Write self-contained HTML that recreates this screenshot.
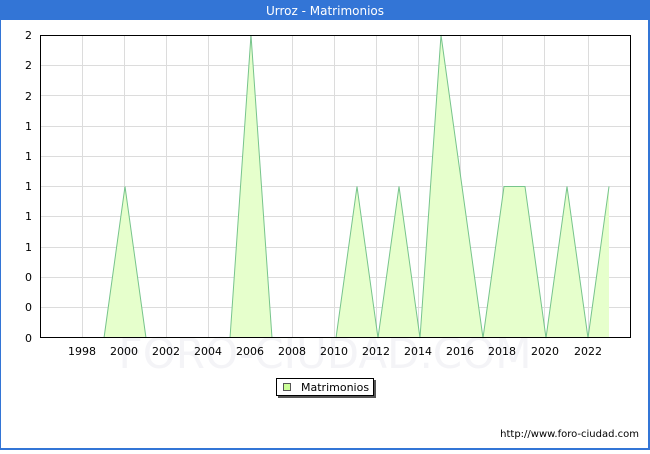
<!DOCTYPE html>
<html><head><meta charset="utf-8"><style>
body{margin:0;width:650px;height:450px;overflow:hidden;background:#fff;font-family:"DejaVu Sans","Liberation Sans",sans-serif;}
</style></head><body>
<svg width="650" height="450" xmlns="http://www.w3.org/2000/svg" font-family="DejaVu Sans, Liberation Sans, sans-serif">
<rect x="0" y="0" width="650" height="450" fill="#fff"/>
<rect x="0.5" y="0.5" width="648" height="448" fill="none" stroke="#3375d6" stroke-width="1"/>
<rect x="648" y="0" width="2" height="450" fill="#3375d6"/>
<rect x="0" y="448" width="650" height="2" fill="#3375d6"/>
<rect x="0" y="0" width="650" height="20" fill="#3375d6"/>
<text x="325" y="15" fill="#fff" font-size="12" text-anchor="middle">Urroz - Matrimonios</text>
<text x="325" y="368" fill="#f4f4f7" font-size="42" text-anchor="middle">FORO-CIUDAD.COM</text>
<g stroke="#dcdcdc" stroke-width="1">
<path d="M40 65.5H630M40 95.5H630M40 126.5H630M40 156.5H630M40 186.5H630M40 216.5H630M40 247.5H630M40 277.5H630M40 307.5H630"/>
<path d="M82.5 35V338M124.5 35V338M166.5 35V338M208.5 35V338M250.5 35V338M292.5 35V338M334.5 35V338M376.5 35V338M418.5 35V338M460.5 35V338M502.5 35V338M544.5 35V338M588.5 35V338"/>
</g>
<path d="M104 338L125 186.5L146 338L230 338L251 35L272 338L336 338L357 186.5L378 338L399 186.5L420 338L441 35L462 186.5L483 338L504 186.5L525 186.5L546 338L567 186.5L588 338L609 186.5L609 338Z" fill="#e6ffcc"/>
<path d="M104 338L125 186.5L146 338M230 338L251 35L272 338M336 338L357 186.5L378 338L399 186.5L420 338L441 35L462 186.5L483 338L504 186.5L525 186.5L546 338L567 186.5L588 338L609 186.5" fill="none" stroke="#77c48c" stroke-width="1"/>
<rect x="40.5" y="35.5" width="590" height="302" fill="none" stroke="#000" stroke-width="1"/>
<g font-size="11" fill="#000" text-anchor="end">
<text x="32" y="39">2</text><text x="32" y="69">2</text><text x="32" y="100">2</text><text x="32" y="130">1</text><text x="32" y="160">1</text><text x="32" y="190">1</text><text x="32" y="220">1</text><text x="32" y="251">1</text><text x="32" y="281">0</text><text x="32" y="311">0</text><text x="32" y="342">0</text>
</g>
<g font-size="11" fill="#000" text-anchor="middle">
<text x="82" y="355">1998</text><text x="124" y="355">2000</text><text x="166" y="355">2002</text><text x="208" y="355">2004</text><text x="250" y="355">2006</text><text x="292" y="355">2008</text><text x="334" y="355">2010</text><text x="376" y="355">2012</text><text x="418" y="355">2014</text><text x="460" y="355">2016</text><text x="502" y="355">2018</text><text x="545" y="355">2020</text><text x="588" y="355">2022</text>
</g>
<rect x="278" y="380" width="98" height="18" fill="#555"/>
<rect x="276.5" y="378.5" width="97" height="17" fill="#fff" stroke="#000"/>
<rect x="283.5" y="383.5" width="7" height="7" fill="#ccff99" stroke="#555"/>
<text x="301" y="391" font-size="11" fill="#000">Matrimonios</text>
<text x="639" y="437" font-size="10" fill="#000" text-anchor="end">http://www.foro-ciudad.com</text>
</svg>
</body></html>
